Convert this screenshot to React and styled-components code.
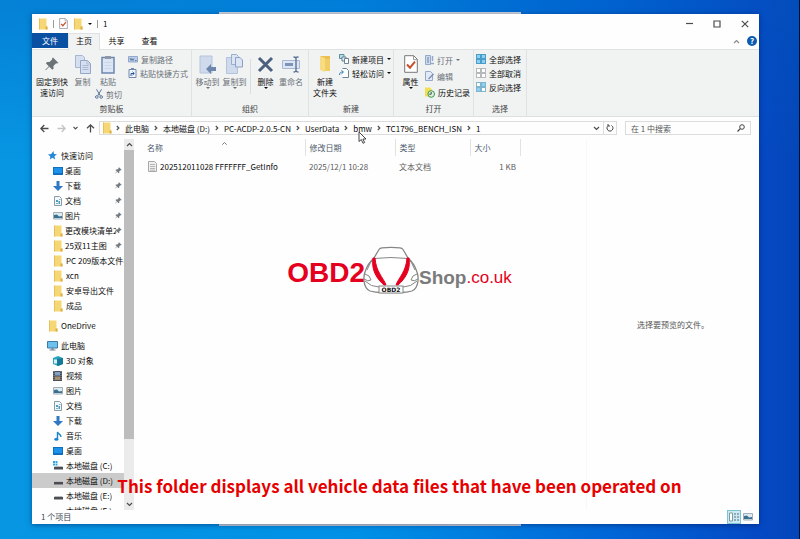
import React from "react"
import styled, { createGlobalStyle, css } from "styled-components"

const GlobalStyle = createGlobalStyle`
  * {
    box-sizing: border-box;
  }
  body {
    margin: 0;
    font-family: "Noto Sans CJK SC", "Noto Sans", sans-serif;
    font-size: 8px;
    line-height: 11px;
    color: #0c0c0c;
  }
  button, input {
    font: inherit;
    color: inherit;
    padding: 0;
    margin: 0;
    border: 0;
    background: none;
  }
  a {
    color: inherit;
    text-decoration: none;
  }
`

const Desktop = styled.div`
  position: relative;
  display: flex;
  height: 100vh;
  padding: 14px 40px 15px 32px;
  border-right: 1px solid #02143c;
  overflow: hidden;
  background: linear-gradient(
      180deg,
      rgba(0, 90, 190, 0.35),
      rgba(0, 160, 240, 0) 30%
    ),
    linear-gradient(
      90deg,
      #0796e2 0%,
      #0090e6 45%,
      #0068d8 75%,
      #0549c4 95%,
      #0446b8 100%
    );
`
const BackWindow = styled.div`
  position: absolute;
  top: 12px;
  bottom: 13px;
  left: 219px;
  width: 302px;
  background: #cfd5dc;
`
const Window = styled.main`
  position: relative;
  display: flex;
  flex-direction: column;
  flex: 1;
  min-width: 0;
  background: #fefefe;
  box-shadow: 0 1px 5px rgba(0, 20, 80, 0.5);
`

const TitleBar = styled.header`
  display: flex;
  align-items: center;
  flex: none;
  height: 19px;
  padding-left: 6px;
`
const QuickTools = styled.div`
  display: flex;
  align-items: center;
  gap: 5px;
  flex: 1;
`
const Divider = styled.span`
  width: 1px;
  height: 8px;
  background: #9a9a9a;
`
const Title = styled.h1`
  margin: 0;
  font-size: 8px;
  font-weight: 400;
`
const WindowButton = styled.button`
  display: flex;
  align-items: center;
  justify-content: center;
  width: 28px;
  height: 19px;
`

const TabBar = styled.nav`
  display: flex;
  flex: none;
  height: 17px;
  border-bottom: 1px solid #dfe2e3;
`
const Tab = styled.button`
  width: 33px;
  height: 15px;
  ${({ $kind }) =>
    $kind === "file" &&
    css`
      width: 36px;
      color: #fff;
      background: #0a50a2;
    `}
  ${({ $kind }) =>
    $kind === "active" &&
    css`
      width: 32px;
      height: 17px;
      padding-bottom: 3px;
      border: 1px solid #dfe2e3;
      border-bottom: 0;
      background: #f1f3f3;
    `}
`
const TabTools = styled.div`
  display: flex;
  align-items: center;
  gap: 7px;
  margin-left: auto;
  padding-right: 2px;
`
const HelpButton = styled.button`
  width: 10px;
  height: 10px;
  border-radius: 50%;
  font-weight: 700;
  line-height: 10px;
  color: #fff;
  background: #0a5cb0;
`

const Ribbon = styled.section`
  display: flex;
  flex: none;
  height: 67px;
  background: #f1f3f3;
  border-bottom: 1px solid #dcdfe0;
`
const Group = styled.div`
  display: flex;
  flex-direction: column;
  flex: none;
  width: ${({ $width }) => $width}px;
  padding: 2px 2px 0;
  border-right: 1px solid #dfe2e3;
`
const GroupBody = styled.div`
  display: flex;
  flex: 1;
`
const GroupLabel = styled.div`
  line-height: 14px;
  text-align: center;
  color: #444;
`
const Column = styled.div`
  display: flex;
  flex-direction: column;
  flex: none;
  width: ${({ $width }) => ($width ? `${$width}px` : "auto")};
`
const BigButton = styled.button`
  display: flex;
  flex-direction: column;
  align-items: center;
  flex: none;
  align-self: flex-start;
  width: ${({ $width }) => $width}px;
  white-space: nowrap;
  color: ${({ $dim }) => ($dim ? "#6a7076" : "#0c0c0c")};
`
const BigIcon = styled.span`
  display: flex;
  align-items: center;
  justify-content: center;
  height: 24px;
`
const SmallButton = styled.button`
  display: flex;
  align-items: center;
  gap: 3px;
  height: ${({ $row }) => $row || 14}px;
  white-space: nowrap;
  color: ${({ $dim }) => ($dim ? "#6a7076" : "#0c0c0c")};
`
const Separator = styled.span`
  width: 1px;
  height: 35px;
  margin: 7px 2px 0;
  background: #dadddf;
`
const Caret = styled.span`
  border: 2px solid transparent;
  border-top-color: currentColor;
  border-bottom: 0;
`

const AddressRow = styled.div`
  display: flex;
  align-items: center;
  flex: none;
  height: 22px;
  padding: 0 8px;
  gap: 8px;
`
const History = styled.div`
  display: flex;
  align-items: center;
  justify-content: space-between;
  width: 55px;
`
const AddressBox = styled.div`
  display: flex;
  align-items: center;
  flex: 1;
  height: 14px;
  margin-left: -4px;
  padding-left: 2px;
  border: 1px solid #dcdcdc;
`
const Crumbs = styled.div`
  display: flex;
  align-items: center;
  gap: 5px;
  flex: 1;
  margin-left: 4px;
`
const Crumb = styled.a`
  position: relative;
  white-space: nowrap;
`
const Pointer = styled.svg`
  position: absolute;
  top: 8px;
  left: 5px;
  width: 9px;
  height: 13px;
  z-index: 1;
`
const BoxButton = styled.button`
  display: flex;
  align-items: center;
  justify-content: center;
  width: 13px;
  height: 12px;
  border-left: ${({ $line }) => ($line ? "1px solid #dcdcdc" : 0)};
`
const SearchBox = styled.label`
  display: flex;
  align-items: center;
  width: 126px;
  height: 14px;
  padding: 0 5px;
  border: 1px solid #dcdcdc;
`
const SearchInput = styled.input`
  flex: 1;
  min-width: 0;
  outline: 0;
  &::placeholder {
    color: #555;
    opacity: 1;
  }
`

const Content = styled.div`
  display: flex;
  flex: 1;
  min-height: 0;
`
const Tree = styled.nav`
  flex: none;
  width: 92px;
  padding-top: 9px;
  overflow: hidden;
`
const TreeItem = styled.a`
  display: flex;
  align-items: center;
  gap: ${({ $pinned }) => ($pinned ? 2 : 3)}px;
  height: 15px;
  margin-top: ${({ $gap }) => ($gap ? 5 : 0)}px;
  padding-left: ${({ $root }) => ($root ? 15 : 20)}px;
  padding-right: ${({ $pinned }) => ($pinned ? 2 : 0)}px;
  background: ${({ $selected }) => ($selected ? "#cbcbcb" : "none")};
`
const TreeLabel = styled.span`
  flex: 1;
  min-width: 0;
  margin-right: ${({ $pinned }) => ($pinned ? -3 : 0)}px;
  overflow: hidden;
  white-space: nowrap;
`
const TreeIcon = styled.span`
  display: flex;
  justify-content: center;
  flex: none;
  width: 11px;
`
const Scrollbar = styled.div`
  display: flex;
  flex-direction: column;
  flex: none;
  width: 10px;
  background: #ebebeb;
`
const ScrollButton = styled.button`
  display: flex;
  align-items: center;
  justify-content: center;
  height: 11px;
`
const Thumb = styled.div`
  flex: 290;
  background: #bdbdbd;
`
const Track = styled.div`
  flex: 60;
`

const Files = styled.section`
  flex: 1;
  min-width: 0;
`
const FileTable = styled.table`
  width: 100%;
  table-layout: fixed;
  border-collapse: collapse;
`
const HeadCell = styled.th`
  width: ${({ $width }) => ($width ? `${$width}px` : "auto")};
  height: 17px;
  padding: 0 4px;
  font-weight: 400;
  text-align: left;
  color: #4c5a6c;
  border-right: ${({ $width }) => ($width ? "1px solid #e2e2e2" : 0)};
  &:first-child {
    padding-left: 13px;
  }
`
const HeadLabel = styled.span`
  display: flex;
  align-items: center;
  gap: 59px;
`
const SortMark = styled.svg`
  width: 5px;
  height: 3px;
  align-self: flex-start;
`
const Cell = styled.td`
  height: 20px;
  padding: 0 4px;
  white-space: nowrap;
  color: ${({ $main }) => ($main ? "#0c0c0c" : "#606060")};
  text-align: ${({ $right }) => ($right ? "right" : "left")};
  &:first-child {
    padding-left: 14px;
  }
`
const FileName = styled.a`
  display: flex;
  align-items: center;
  gap: 3px;
`
const Preview = styled.aside`
  display: flex;
  align-items: center;
  justify-content: center;
  flex: none;
  width: 173px;
  border-left: 1px solid #f8f8f8;
  color: #555;
`

const StatusBar = styled.footer`
  display: flex;
  align-items: center;
  flex: none;
  height: 14px;
  padding: 0 4px 0 9px;
  color: #3b4654;
`
const StatusText = styled.span`
  flex: 1;
  line-height: 14px;
  align-self: flex-start;
`
const ViewButton = styled.button`
  display: flex;
  align-items: center;
  justify-content: center;
  width: 14px;
  height: 14px;
  border: ${({ $on }) => ($on ? "1px solid #7cc3d6" : 0)};
  background: ${({ $on }) => ($on ? "#cdeaf2" : "none")};
`

const Watermark = styled.div`
  position: absolute;
  top: 246px;
  left: 0;
  right: 0;
  display: flex;
  justify-content: center;
  height: 48px;
  font-family: "Liberation Sans", Arial, sans-serif;
  line-height: 48px;
  pointer-events: none;
`
const Brand = styled.span`
  font-size: 28px;
  font-weight: 700;
  line-height: 53px;
  color: #e60020;
  margin-right: -2px;
`
const BrandShop = styled.span`
  font-size: 19px;
  font-weight: 700;
  line-height: 64px;
  color: #7b7b7b;
`
const BrandDomain = styled.span`
  font-size: 17px;
  line-height: 64px;
  color: #e60020;
`
const Caption = styled.p`
  position: absolute;
  left: 0;
  right: 0;
  bottom: 39px;
  margin: 0;
  font-size: 17px;
  font-weight: 700;
  line-height: 28px;
  text-align: center;
  color: #e60000;
  pointer-events: none;
`

const Svg = styled.svg`
  display: block;
  flex: none;
  fill: none;
`

const Folder = ({ w = 10, h = 12 }) => (
  <Svg width={w} height={h} viewBox='0 0 10 12'>
    <path d='M1 .5h7.500v8h1v3H1z' fill='#f6d775' />
    <path d='M7.500 8.500h2v3h-2z' fill='#dcae48' />
    <path d='M1 .5h1v11H1z' fill='#e9bf5c' />
  </Svg>
)
const CheckPage = ({ w = 9, h = 11 }) => (
  <Svg width={w} height={h} viewBox='0 0 14 18'>
    <path d='M.7.7h9l3.600 3.600v13H.7z' fill='#fff' stroke='#777' />
    <path d='M9.500.7v4h4' stroke='#999' />
    <path d='M3 9.500l3 3.200 5-6' stroke='#c8502c' strokeWidth='2' />
  </Svg>
)
const Pin = ({ size = 7, color = "#737b83" }) => (
  <Svg width={size} height={size} viewBox='0 0 14 14'>
    <path
      d='M8 .5l5.500 5.500-1.600.6-.8-.3-2.700 2.700.2 2.400-1.300 1.300-3-3L.8 13.200.3 12.700l3.500-3.500-3-3 1.300-1.300 2.400.2 2.800-2.800-.3-.7z'
      fill={color}
    />
  </Svg>
)
const CopyPages = () => (
  <Svg width='16' height='19' viewBox='0 0 16 19'>
    <path d='M.5.5h7l2 2v10h-9z' fill='#d5dff0' stroke='#a7b6d0' />
    <path d='M5.500 5.500h7l3 3v10h-10z' fill='#d5dff0' stroke='#93a6c6' />
    <path d='M12 5.500v3.500h3.500M7.500 10.500h6M7.500 12.500h6M7.500 14.500h6' stroke='#a9b9d4' />
  </Svg>
)
const Clipboard = () => (
  <Svg width='14' height='19' viewBox='0 0 14 19'>
    <path d='M1 2.500h12v15.500H1z' fill='#dbe5f4' stroke='#6f86b0' strokeWidth='1.500' />
    <path d='M4 1h6v3H4z' fill='#8d99ab' />
    <path d='M3.500 7.500h7M3.500 10.500h7M3.500 13.500h7' stroke='#cad7ea' />
  </Svg>
)
const Scissors = () => (
  <Svg width='8' height='10' viewBox='0 0 8 10' stroke='#5a7396'>
    <path d='M1.500.3l3.800 6.500M6.500.3L2.700 6.800' />
    <circle cx='1.800' cy='8' r='1.300' />
    <circle cx='6.200' cy='8' r='1.300' />
  </Svg>
)
const PathTag = () => (
  <Svg width='10' height='7' viewBox='0 0 10 7'>
    <path d='M.5.5h9v5.500h-9z' fill='#bccde6' stroke='#93a9cc' />
    <path d='M2 2l1 2.500L4 2.500l1 2 1-2M7 4.500h1.500' stroke='#536d98' strokeWidth='.8' />
  </Svg>
)
const ShortcutPage = () => (
  <Svg width='9' height='10' viewBox='0 0 9 10'>
    <path d='M1 1.500h7v8H1z' fill='#f3f7fd' stroke='#7187ad' />
    <path d='M3 0h3v2H3z' fill='#7187ad' />
    <path d='M3 8V5.500h3M4.500 3.800L6.300 5.500 4.500 7' stroke='#2e5290' />
  </Svg>
)
const MoveTo = () => (
  <Svg width='17' height='19' viewBox='0 0 17 19'>
    <path d='M1 1h12v17H1z' fill='#cfdaec' stroke='#b4c3dc' />
    <path d='M7 14l5-5v3h5v4h-5v3z' fill='#6e86ad' />
  </Svg>
)
const CopyTo = () => (
  <Svg width='17' height='20' viewBox='0 0 17 20'>
    <path d='M.5 3.500h11v16H.5z' fill='#cfdaec' stroke='#b4c3dc' />
    <path d='M5.500.5h5l2 2v8h-7z' fill='#dce5f3' stroke='#9caeca' />
    <path d='M9.500 3.500h4.500l2.500 2.500v7h-7z' fill='#dce5f3' stroke='#8ca1c3' />
  </Svg>
)
const Cross = () => (
  <Svg width='17' height='17' viewBox='0 0 17 17'>
    <path d='M2 2l13 13M15 2L2 15' stroke='#4d5f7e' strokeWidth='3' />
  </Svg>
)
const Rename = () => (
  <Svg width='18' height='17' viewBox='0 0 18 17'>
    <path d='M.5 4.500h17v8H.5z' fill='#dce5f3' stroke='#a9b9d4' />
    <path d='M3 7h8v3H3z' fill='#7d93ba' />
    <path d='M11.500 1c1.500 0 2.500 0 2.500 1.500C14 1 15 1 16.500 1M14 2v13M11.500 16c1.500 0 2.500 0 2.500-1.500 0 1.500 1 1.500 2.500 1.500' stroke='#546b92' strokeWidth='1.300' />
  </Svg>
)
const NewFolder = () => (
  <Svg width='12' height='18' viewBox='0 0 12 18'>
    <path d='M1 1h10v12H1z' fill='#ebbf50' />
    <path d='M1 1l5 2v14l-5-2z' fill='#f8dc83' />
    <path d='M6 4h5v12H6z' fill='#f2cd66' />
  </Svg>
)
const NewItem = () => (
  <Svg width='10' height='10' viewBox='0 0 10 10'>
    <path d='M.5.5h4.500v4H.5z' fill='#b9dfe6' stroke='#5b8f9c' />
    <path d='M3 3h4v4H3z' fill='#dfeef4' stroke='#6b8298' />
    <path d='M5.500 4.500h4v5h-4z' fill='#fff' stroke='#6b8298' />
  </Svg>
)
const EasyAccess = () => (
  <Svg width='10' height='10' viewBox='0 0 10 10'>
    <path d='M3.500.5h4l2 2v7h-6' fill='#fff' stroke='#6b8298' />
    <path d='M.5 7c0-2 1-3 3.500-3M2.500 2.500L4.500 4l-2 1.800' stroke='#2f80b5' />
  </Svg>
)
const OpenIcon = () => (
  <Svg width='9' height='10' viewBox='0 0 9 10'>
    <path d='M.5.5h5v9h-5z' fill='#cddbee' stroke='#94a8c8' />
    <path d='M2 3h2M2 5h2M2 7h2' stroke='#6680aa' />
    <path d='M7.500 1v5M6 8.500h3' stroke='#94a8c8' strokeWidth='1.500' />
  </Svg>
)
const EditIcon = () => (
  <Svg width='9' height='10' viewBox='0 0 9 10'>
    <path d='M.5.5h5l2 2v7h-7z' fill='#e2eaf5' stroke='#94a8c8' />
    <path d='M3.500 8L8.500 3' stroke='#7890b8' strokeWidth='1.500' />
  </Svg>
)
const HistoryIcon = () => (
  <Svg width='10' height='11' viewBox='0 0 10 11'>
    <path d='M0 .5h5l2 2v7H0z' fill='#f1df52' />
    <circle cx='6.200' cy='7' r='3.300' fill='#dff0dc' stroke='#3a9650' />
    <path d='M6.200 5v2.200h-2' stroke='#3b5a46' />
  </Svg>
)
const SelectGrid = ({ fills, stroke = "#4a9cc9" }) => (
  <Svg width='10' height='10' viewBox='0 0 10 10'>
    {fills.map((fill, i) => (
      <rect
        key={i}
        x={i % 2 ? 5.5 : 0.5}
        y={i > 1 ? 5.5 : 0.5}
        width='4'
        height='4'
        fill={fill}
        stroke={stroke}
      />
    ))}
  </Svg>
)
const Arrow = ({ turn = 0, color = "#4c4c4c" }) => (
  <Svg width='9' height='9' viewBox='0 0 9 9'>
    <path
      d='M8.500 4.500H1M4.300 1L.9 4.500 4.300 8'
      stroke={color}
      strokeWidth='1.300'
      transform={`rotate(${turn} 4.500 4.500)`}
    />
  </Svg>
)
const Chevron = ({ d = "M1 1l2.500 2.500L6 1", w = 7, h = 5, color = "#4c4c4c" }) => (
  <Svg width={w} height={h} viewBox={`0 0 ${w} ${h}`}>
    <path d={d} stroke={color} strokeWidth='1.200' />
  </Svg>
)
const Next = () => <Chevron w={4} h={6} d='M.8 1L2.800 3 .8 5' />

const Star = () => (
  <Svg width='9' height='9' viewBox='0 0 10 10'>
    <path d='M6 0l.7 3.300 3.300.4-2.800 2 .8 3.800-3-2L2 9.500l.6-3.500L0 3.800l3.600-.5z' fill='#2488d8' />
  </Svg>
)
const Monitor = () => (
  <Svg width='10' height='8' viewBox='0 0 10 8'>
    <path d='M0 0h10v8H0z' fill='#0f6fc0' />
    <path d='M1 1h8v5H1z' fill='#1d92ea' />
  </Svg>
)
const Download = () => (
  <Svg width='10' height='10' viewBox='0 0 10 10'>
    <path d='M3.500 0h3v5H10L5 10 0 5h3.500z' fill='#2f78c4' />
  </Svg>
)
const Doc = () => (
  <Svg width='8' height='10' viewBox='0 0 8 10'>
    <path d='M.5.5h5l2 2v7h-7z' fill='#f3f7f9' stroke='#8c9aa3' />
    <path d='M2 4h2v2H2zM4.500 5H6v3H4.500z' fill='#4b9cc4' />
    <path d='M2 7.500h2M5 3.500h1.500' stroke='#7bb4cf' />
  </Svg>
)
const Photo = () => (
  <Svg width='10' height='8' viewBox='0 0 10 8'>
    <path d='M.5.5h9v6.500h-9z' fill='#dceaf1' stroke='#a3adb5' />
    <path d='M1 3l3-.5 2 2 3-.5v2H1z' fill='#3a6f92' />
  </Svg>
)
const Computer = () => (
  <Svg width='11' height='10' viewBox='0 0 11 10'>
    <path d='M.5.5h10v6.500H.5z' fill='#6dc1ef' stroke='#3d7ba6' />
    <path d='M4.500 7h2v1.500h-2zM2.500 8.500h6v1h-6z' fill='#74879a' />
  </Svg>
)
const Cube = () => (
  <Svg width='10' height='10' viewBox='0 0 10 10'>
    <path d='M0 2l5-2 5 2v6L5 10 0 8z' fill='#2ba3bd' />
    <path d='M4 3l6-1v6l-5 2-1-1z' fill='#157a99' />
    <path d='M1 3.500h3v4H1z' fill='#d7f2f6' />
  </Svg>
)
const Film = () => (
  <Svg width='9' height='10' viewBox='0 0 9 10'>
    <path d='M0 0h9v10H0z' fill='#4a4f58' />
    <path d='M2 1h5v3.500H2z' fill='#7fa1c7' />
    <path d='M2 5.500h5V9H2z' fill='#a58e6a' />
    <path d='M1 0v10M8 0v10' stroke='#a5a8ad' strokeWidth='.8' strokeDasharray='1 1' />
  </Svg>
)
const Music = () => (
  <Svg width='8' height='10' viewBox='0 0 8 10'>
    <path d='M3.500 8V1c.5 2 3.500 2 3.500 5' stroke='#1d83cf' strokeWidth='1.400' />
    <ellipse cx='2.300' cy='8.200' rx='2' ry='1.500' fill='#1d83cf' />
  </Svg>
)
const Disk = ({ system }) => (
  <Svg width='10' height='9' viewBox='0 0 10 9'>
    {system && <path d='M0 0h2v2H0zM2.500 0h2v2h-2zM0 2.500h2v2H0zM2.500 2.500h2v2h-2z' fill='#35a7de' />}
    <path d='M2 5h7l1 1H1z' fill='#b9bdc0' />
    <path d='M1 6h9v2.500H1z' fill='#4b4f53' />
  </Svg>
)
const TextFile = () => (
  <Svg width='9' height='11' viewBox='0 0 9 11'>
    <path d='M.5.5h6l2 2v8h-8z' fill='#f0f0f0' stroke='#a8a8a8' />
    <path d='M2 3.500h5M2 5.500h5M2 7.500h5M2 9.200h5' stroke='#b5b5b5' />
  </Svg>
)

const Car = () => (
  <Svg width='56' height='48' viewBox='0 0 56 48' stroke='#868686'>
    <path
      d='M11 12L16 3.500Q17 2 19 1.800Q28 .8 37 1.800Q39 2 40 3.500L45 12Q51 17 54 26Q55.500 30 55 35Q54 43 49 45Q44 46.500 37 46.500H19Q12 46.500 7 45Q2 43 1 35Q.5 30 2 26Q5 17 11 12Z'
      fill='#fff'
      strokeWidth='1.300'
    />
    <path d='M11 12.500Q28 10.500 45 12.500' />
    <path d='M10 13Q7 17 4 24M46 13Q49 17 52 24' />
    <path d='M2 28Q7 29 8 34Q5 36 1 33M54 28Q49 29 48 34Q51 36 55 33' />
    <path d='M2 35Q8 41 16 41H40Q48 41 54 35' />
    <path d='M10 12C8 24 14 33 21 39L23 39C20 31 13 26 12 12Z' fill='#e60020' stroke='#e60020' />
    <path d='M46 12C48 24 42 33 35 39L33 39C36 31 43 26 44 12Z' fill='#e60020' stroke='#e60020' />
    <rect x='16' y='40' width='24' height='7' fill='#fff' />
    <text
      x='28'
      y='46'
      textAnchor='middle'
      fontFamily='DejaVu Sans'
      fontSize='6'
      fontWeight='700'
      fill='#111'
      stroke='none'
    >
      OBD2
    </text>
  </Svg>
)

const tree = [
  { label: "快速访问", icon: <Star />, root: true },
  { label: "桌面", icon: <Monitor />, pinned: true },
  { label: "下载", icon: <Download />, pinned: true },
  { label: "文档", icon: <Doc />, pinned: true },
  { label: "图片", icon: <Photo />, pinned: true },
  { label: "更改模块清单2", icon: <Folder />, pinned: true },
  { label: "25双11主图", icon: <Folder />, pinned: true },
  { label: "PC 209版本文件导", icon: <Folder /> },
  { label: "xcn", icon: <Folder /> },
  { label: "安卓导出文件", icon: <Folder /> },
  { label: "成品", icon: <Folder /> },
  { label: "OneDrive", icon: <Folder />, root: true, gap: true },
  { label: "此电脑", icon: <Computer />, root: true, gap: true },
  { label: "3D 对象", icon: <Cube /> },
  { label: "视频", icon: <Film /> },
  { label: "图片", icon: <Photo /> },
  { label: "文档", icon: <Doc /> },
  { label: "下载", icon: <Download /> },
  { label: "音乐", icon: <Music /> },
  { label: "桌面", icon: <Monitor /> },
  { label: "本地磁盘 (C:)", icon: <Disk system /> },
  { label: "本地磁盘 (D:)", icon: <Disk />, selected: true },
  { label: "本地磁盘 (E:)", icon: <Disk /> },
  { label: "本地磁盘 (F:)", icon: <Disk /> },
]

const crumbs = [
  "此电脑",
  "本地磁盘 (D:)",
  "PC-ACDP-2.0.5-CN",
  "UserData",
  "bmw",
  "TC1796_BENCH_ISN",
  "1",
]

const Big = ({ icon, lines, caret, ...rest }) => (
  <BigButton {...rest}>
    <BigIcon>{icon}</BigIcon>
    {lines.map((line) => (
      <span key={line}>{line}</span>
    ))}
    {caret && <Caret />}
  </BigButton>
)

const Small = ({ icon, label, caret, ...rest }) => (
  <SmallButton {...rest}>
    {icon}
    {label}
    {caret && <Caret />}
  </SmallButton>
)

const RibbonBar = () => (
  <Ribbon>
    <Group $width={160}>
      <GroupBody>
        <Big $width={36} icon={<Pin size={14} color='#6b7278' />} lines={["固定到快", "速访问"]} />
        <Big $width={25} $dim icon={<CopyPages />} lines={["复制"]} />
        <Column $width={33}>
          <Big $width={26} $dim icon={<Clipboard />} lines={["粘贴"]} />
          <Small $dim icon={<Scissors />} label='剪切' />
        </Column>
        <Column>
          <Small $dim icon={<PathTag />} label='复制路径' />
          <Small $dim icon={<ShortcutPage />} label='粘贴快捷方式' />
        </Column>
      </GroupBody>
      <GroupLabel>剪贴板</GroupLabel>
    </Group>
    <Group $width={117}>
      <GroupBody>
        <Big $width={27} $dim caret icon={<MoveTo />} lines={["移动到"]} />
        <Big $width={27} $dim caret icon={<CopyTo />} lines={["复制到"]} />
        <Separator />
        <Big $width={25} caret icon={<Cross />} lines={["删除"]} />
        <Big $width={26} $dim icon={<Rename />} lines={["重命名"]} />
      </GroupBody>
      <GroupLabel>组织</GroupLabel>
    </Group>
    <Group $width={85}>
      <GroupBody>
        <Big $width={28} icon={<NewFolder />} lines={["新建", "文件夹"]} />
        <Column>
          <Small caret icon={<NewItem />} label='新建项目' />
          <Small caret icon={<EasyAccess />} label='轻松访问' />
        </Column>
      </GroupBody>
      <GroupLabel>新建</GroupLabel>
    </Group>
    <Group $width={80}>
      <GroupBody>
        <Big $width={29} caret icon={<CheckPage w={14} h={18} />} lines={["属性"]} />
        <Column>
          <Small $row={16} $dim caret icon={<OpenIcon />} label='打开' />
          <Small $row={16} $dim icon={<EditIcon />} label='编辑' />
          <Small $row={16} icon={<HistoryIcon />} label='历史记录' />
        </Column>
      </GroupBody>
      <GroupLabel>打开</GroupLabel>
    </Group>
    <Group $width={53}>
      <GroupBody>
        <Column>
          <Small icon={<SelectGrid fills={["#8fd0f0", "#8fd0f0", "#8fd0f0", "#8fd0f0"]} />} label='全部选择' />
          <Small icon={<SelectGrid stroke='#b5b9bc' fills={["#fff", "#fff", "#fff", "#fff"]} />} label='全部取消' />
          <Small icon={<SelectGrid stroke='#7fb4d0' fills={["#fff", "#8fd0f0", "#8fd0f0", "#fff"]} />} label='反向选择' />
        </Column>
      </GroupBody>
      <GroupLabel>选择</GroupLabel>
    </Group>
  </Ribbon>
)

const TreePane = () => (
  <Tree>
    {tree.map(({ label, icon, root, gap, pinned, selected }, i) => (
      <TreeItem
        key={i}
        href='#'
        $root={root}
        $gap={gap}
        $pinned={pinned}
        $selected={selected}
      >
        <TreeIcon>{icon}</TreeIcon>
        <TreeLabel $pinned={pinned}>{label}</TreeLabel>
        {pinned && <Pin />}
      </TreeItem>
    ))}
  </Tree>
)

const FilePane = () => (
  <Files>
    <FileTable>
      <thead>
        <tr>
          <HeadCell $width={171}>
            <HeadLabel>
              名称
              <SortMark viewBox='0 0 5 3'>
                <path d='M.3 2.700L2.500.5l2.200 2.200' fill='none' stroke='#777' />
              </SortMark>
            </HeadLabel>
          </HeadCell>
          <HeadCell $width={90}>修改日期</HeadCell>
          <HeadCell $width={75}>类型</HeadCell>
          <HeadCell $width={50}>大小</HeadCell>
          <HeadCell as='td' />
        </tr>
      </thead>
      <tbody>
        <tr>
          <Cell $main>
            <FileName href='#'>
              <TextFile />
              202512011028 FFFFFFF_GetInfo
            </FileName>
          </Cell>
          <Cell>2025/12/1 10:28</Cell>
          <Cell>文本文档</Cell>
          <Cell $right>1 KB</Cell>
          <Cell />
        </tr>
      </tbody>
    </FileTable>
  </Files>
)

export default function App() {
  return (
    <Desktop>
      <GlobalStyle />
      <BackWindow />
      <Window>
        <TitleBar>
          <QuickTools>
            <Folder />
            <Divider />
            <CheckPage />
            <Folder />
            <Caret />
            <Divider />
            <Title>1</Title>
          </QuickTools>
          <WindowButton aria-label='Minimize'>
            <Chevron w={7} h={3} d='M0 1.500h7' />
          </WindowButton>
          <WindowButton aria-label='Maximize'>
            <Chevron w={8} h={8} d='M1 1h6v6H1z' />
          </WindowButton>
          <WindowButton aria-label='Close'>
            <Chevron w={8} h={8} d='M.8.8l6.400 6.400M7.200.8L.8 7.200' />
          </WindowButton>
        </TitleBar>
        <TabBar>
          <Tab $kind='file'>文件</Tab>
          <Tab $kind='active'>主页</Tab>
          <Tab>共享</Tab>
          <Tab>查看</Tab>
          <TabTools>
            <Chevron d='M1 4l2.500-2.500L6 4' color='#8a8a8a' />
            <HelpButton>?</HelpButton>
          </TabTools>
        </TabBar>
        <RibbonBar />
        <AddressRow>
          <History>
            <Arrow />
            <Arrow turn={180} color='#c4c4c4' />
            <Chevron w={5} h={4} d='M.5.8l2 2 2-2' />
            <Arrow turn={90} />
          </History>
          <AddressBox>
            <Folder />
            <Crumbs>
              {crumbs.map((name) => (
                <React.Fragment key={name}>
                  <Next />
                  <Crumb href='#'>
                    {name}
                    {name === "bmw" && (
                      <Pointer viewBox='0 0 9 13'>
                        <path
                          d='M1 1v9.500l2.300-2 1.700 3.800 1.600-.8-1.700-3.500H8z'
                          fill='#fff'
                          stroke='#333'
                          strokeWidth='.9'
                        />
                      </Pointer>
                    )}
                  </Crumb>
                </React.Fragment>
              ))}
            </Crumbs>
            <BoxButton aria-label='Previous locations'>
              <Chevron />
            </BoxButton>
            <BoxButton $line aria-label='Refresh'>
              <Svg width='8' height='8' viewBox='0 0 8 8'>
                <path d='M5.500 1.500A3 3 0 1 1 2.300 1.600M1 1h2v2' stroke='#444' />
              </Svg>
            </BoxButton>
          </AddressBox>
          <SearchBox>
            <SearchInput type='text' placeholder='在 1 中搜索' aria-label='在 1 中搜索' />
            <Svg width='8' height='8' viewBox='0 0 8 8'>
              <circle cx='5' cy='3' r='2.300' stroke='#444' />
              <path d='M3.300 4.700L.5 7.500' stroke='#444' strokeWidth='1.200' />
            </Svg>
          </SearchBox>
        </AddressRow>
        <Content>
          <TreePane />
          <Scrollbar>
            <ScrollButton aria-label='Scroll up'>
              <Chevron d='M1 4l2.500-2.500L6 4' />
            </ScrollButton>
            <Thumb />
            <Track />
            <ScrollButton aria-label='Scroll down'>
              <Chevron />
            </ScrollButton>
          </Scrollbar>
          <FilePane />
          <Preview>选择要预览的文件。</Preview>
        </Content>
        <StatusBar>
          <StatusText>1 个项目</StatusText>
          <ViewButton $on aria-label='Details'>
            <Svg width='10' height='10' viewBox='0 0 10 10'>
              <path d='M.5 1h3v8h-3z' fill='#fff' stroke='#7d9aa5' />
              <path d='M5 2h2M8 2h2M5 5h2M8 5h2M5 8h2M8 8h2' stroke='#51717e' />
            </Svg>
          </ViewButton>
          <ViewButton aria-label='Large icons'>
            <Photo />
          </ViewButton>
        </StatusBar>
      </Window>
      <Watermark>
        <Brand>OBD2</Brand>
        <Car />
        <BrandShop>Shop</BrandShop>
        <BrandDomain>.co.uk</BrandDomain>
      </Watermark>
      <Caption>This folder displays all vehicle data files that have been operated on</Caption>
    </Desktop>
  )
}
